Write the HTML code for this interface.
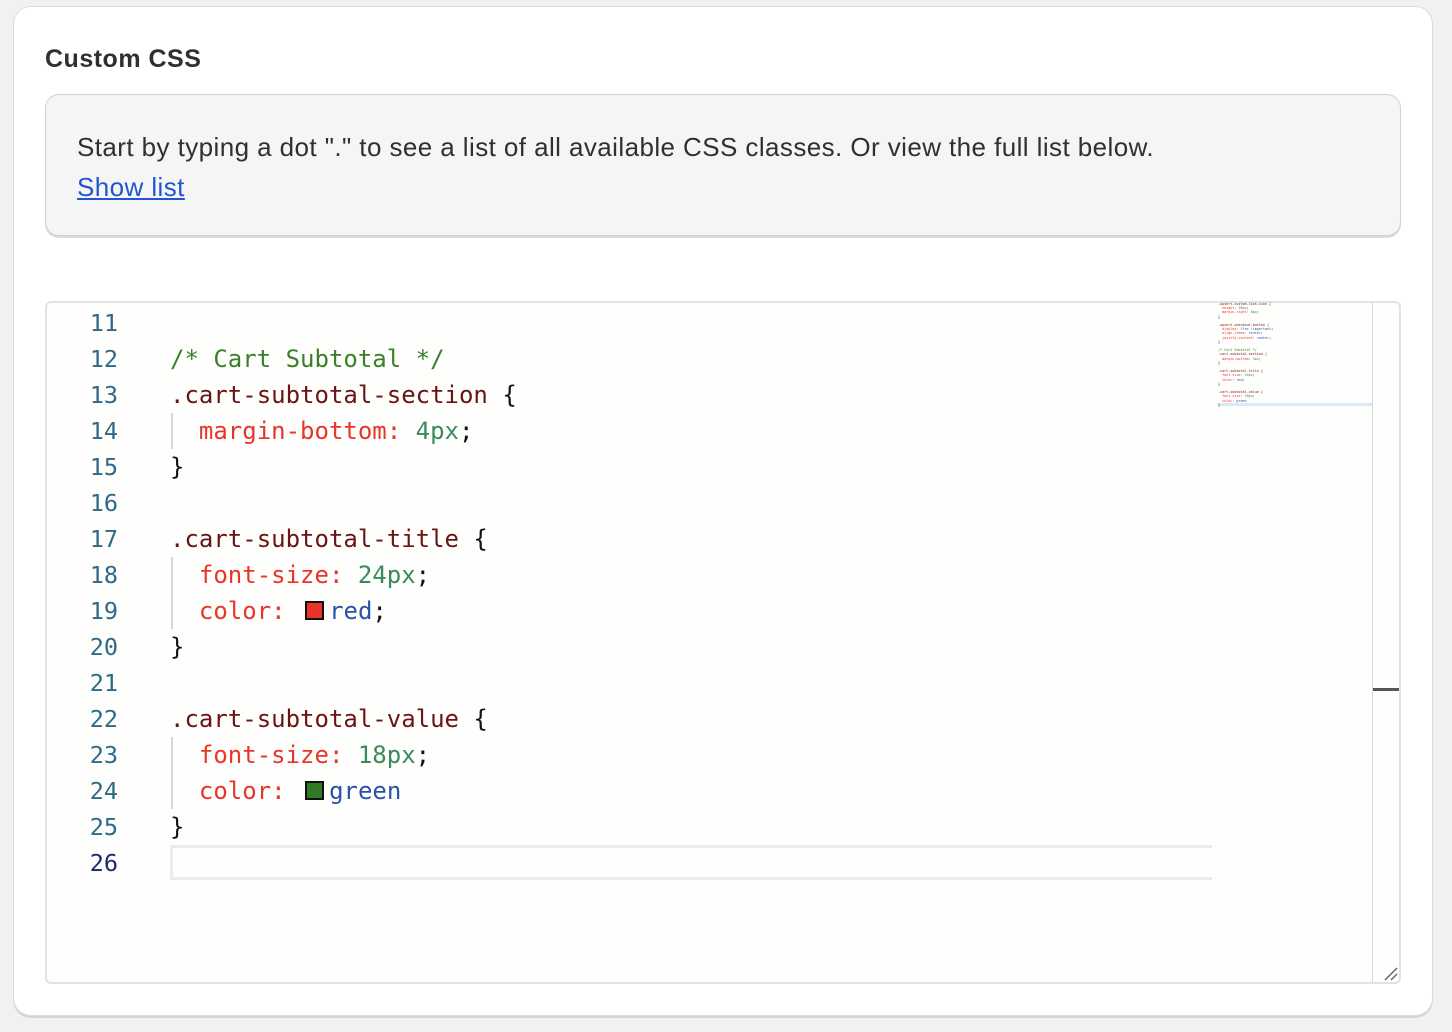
<!DOCTYPE html>
<html><head><meta charset="utf-8"><style>
html,body{margin:0;padding:0;width:1452px;height:1032px;background:#f1f1f1;overflow:hidden;font-family:"Liberation Sans",sans-serif}
.card{position:absolute;left:13px;top:6px;width:1418px;height:1008px;background:#fff;border:1px solid #dcdcdc;border-radius:18px;box-shadow:0 2px 0 #d4d4d4}
h1{position:absolute;left:45px;top:45px;margin:0;font-size:25px;letter-spacing:0.5px;font-weight:bold;color:#303030}
.info{position:absolute;left:45px;top:94px;width:1354px;height:140px;background:#f5f5f5;border:1px solid #d2d2d2;border-radius:14px;box-shadow:0 2px 0 #dadada}
.info p{position:absolute;left:31px;top:32px;margin:0;font-size:26px;letter-spacing:0.42px;line-height:40px;color:#303030;white-space:nowrap}
.info a{color:#2355d0;text-decoration:underline}
.ed{position:absolute;left:45px;top:301px;width:1356px;height:683px;background:#fefefc;border:2px solid #e0e2e6;border-radius:6px;box-sizing:border-box}
.ln{position:absolute;left:60px;width:58px;text-align:right;font-family:"DejaVu Sans Mono","Liberation Mono",monospace;font-size:23.5px;color:#2d6a88;line-height:36px}
.c{position:absolute;left:170px;font-family:"DejaVu Sans Mono","Liberation Mono",monospace;font-size:24px;line-height:36px;white-space:pre;color:#111}
.s{color:#6b1414}.p{color:#e8352a}.n{color:#3a8a5a}.v{color:#2a52a8}.cm{color:#3b7f2a}
.g{position:absolute;left:171px;width:2px;background:#d6d6d6}
.sw{display:inline-block;width:15px;height:15px;border:2px solid #111;vertical-align:-1px;margin-left:5px;margin-right:5px}
.cur{position:absolute;left:170px;top:845px;width:1042px;height:35px;border:3px solid #ececec;border-right:none;box-sizing:border-box}
.sb{position:absolute;left:1372px;top:303px;width:1px;height:679px;background:#d8d8d8}
.mk{position:absolute;left:1373px;top:688px;width:26px;height:3px;background:#555}
.mini{position:absolute;left:1218px;top:302px;font-family:"DejaVu Sans Mono",monospace;font-size:3.4px;line-height:4.2px;white-space:pre}
.minihl{position:absolute;left:1218px;top:403px;width:154px;height:3px;background:#dbe8f8}
</style></head><body>
<div class="card"></div>
<h1>Custom CSS</h1>
<div class="info"><p>Start by typing a dot "." to see a list of all available CSS classes. Or view the full list below.<br><a>Show list</a></p></div>
<div class="ed"></div>
<div class="minihl"></div>
<div class="mini"><span class="s">.upsert-custom-lock-icon {</span>
  <span class="p">height:</span> <span class="n">20px</span>;
  <span class="p">margin-right:</span> <span class="n">8px</span>;
}

<span class="s">.upsert-checkout-button {</span>
  <span class="p">display:</span> <span class="v">flex !important</span>;
  <span class="p">align-items:</span> <span class="v">center</span>;
  <span class="p">justify-content:</span> <span class="v">center</span>;
}

<span class="cm">/* Cart Subtotal */</span>
<span class="s">.cart-subtotal-section {</span>
  <span class="p">margin-bottom:</span> <span class="n">4px</span>;
}

<span class="s">.cart-subtotal-title {</span>
  <span class="p">font-size:</span> <span class="n">24px</span>;
  <span class="p">color:</span> <span class="v">red</span>;
}

<span class="s">.cart-subtotal-value {</span>
  <span class="p">font-size:</span> <span class="n">18px</span>;
  <span class="p">color:</span> <span class="v">green</span>
}</div>
<div class="sb"></div><div class="mk"></div>
<div class="cur"></div>
<div class="g" style="top:413px;height:36px"></div>
<div class="g" style="top:557px;height:72px"></div>
<div class="g" style="top:737px;height:72px"></div>

<div class="ln" style="top:305px">11</div>
<div class="ln" style="top:341px">12</div>
<div class="ln" style="top:377px">13</div>
<div class="ln" style="top:413px">14</div>
<div class="ln" style="top:449px">15</div>
<div class="ln" style="top:485px">16</div>
<div class="ln" style="top:521px">17</div>
<div class="ln" style="top:557px">18</div>
<div class="ln" style="top:593px">19</div>
<div class="ln" style="top:629px">20</div>
<div class="ln" style="top:665px">21</div>
<div class="ln" style="top:701px">22</div>
<div class="ln" style="top:737px">23</div>
<div class="ln" style="top:773px">24</div>
<div class="ln" style="top:809px">25</div>
<div class="ln" style="top:845px;color:#1a2a6a">26</div>

<div class="c" style="top:341px"><span class="cm">/* Cart Subtotal */</span></div>
<div class="c" style="top:377px"><span class="s">.cart-subtotal-section</span> {</div>
<div class="c" style="top:413px">  <span class="p">margin-bottom:</span> <span class="n">4px</span>;</div>
<div class="c" style="top:449px">}</div>
<div class="c" style="top:521px"><span class="s">.cart-subtotal-title</span> {</div>
<div class="c" style="top:557px">  <span class="p">font-size:</span> <span class="n">24px</span>;</div>
<div class="c" style="top:593px">  <span class="p">color:</span> <span class="sw" style="background:#e8352a"></span><span class="v">red</span>;</div>
<div class="c" style="top:629px">}</div>
<div class="c" style="top:701px"><span class="s">.cart-subtotal-value</span> {</div>
<div class="c" style="top:737px">  <span class="p">font-size:</span> <span class="n">18px</span>;</div>
<div class="c" style="top:773px">  <span class="p">color:</span> <span class="sw" style="background:#2f7a22"></span><span class="v">green</span></div>
<div class="c" style="top:809px">}</div>

<svg style="position:absolute;left:1383px;top:966px" width="16" height="16"><path d="M2 14 L14 2 M8 14 L14 8" stroke="#666" stroke-width="1.5"/></svg>
</body></html>
